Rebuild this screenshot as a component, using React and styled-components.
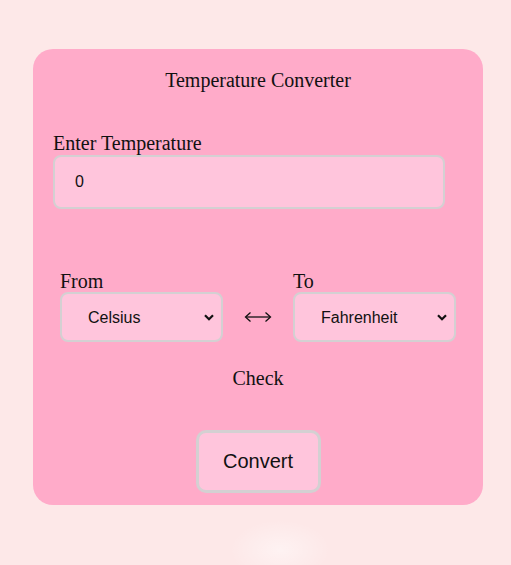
import styled, { createGlobalStyle } from "styled-components";

const GlobalStyle = createGlobalStyle`
    html, body {
        margin: 0;
        padding: 0;
        background: #fde8e8;
    }
`;

const Page = styled.div`
    min-height: 565px;
    box-sizing: border-box;
    padding: 49px 0 0 33px;
    background:
        radial-gradient(ellipse 50px 30px at 280px 550px, rgba(255, 255, 255, 0.45), transparent),
        #fde8e8;
`;

const Card = styled.div`
    width: 450px;
    box-sizing: border-box;
    padding: 18px 20px 12px;
    background: #ffabc9;
    border-radius: 20px;
    font-family: "Liberation Serif", "Times New Roman", serif;
    color: #111;
`;

const Title = styled.h2`
    margin: 0;
    font-size: 20px;
    font-weight: normal;
    text-align: center;
    line-height: 26px;
`;

const Label = styled.label`
    display: block;
    font-size: 20px;
    line-height: 23px;
    margin-top: ${p => p.$top || 0}px;
`;

const TextInput = styled.input`
    display: block;
    width: 392px;
    height: 54px;
    box-sizing: border-box;
    margin-top: 0;
    padding: 0 20px;
    border: 2px solid #d4d0d2;
    border-radius: 8px;
    background: #ffc5dc;
    font-family: "Liberation Sans", Arial, sans-serif;
    font-size: 16px;
    color: #111;
    outline: none;
`;

const Row = styled.div`
    display: flex;
    justify-content: center;
    align-items: flex-end;
    gap: 21px;
    margin-top: 61px;
`;

const Group = styled.div`
    display: flex;
    flex-direction: column;
`;

const SelectWrap = styled.div`
    position: relative;
    width: 163px;
    height: 50px;
    margin-top: -1px;
`;

const Select = styled.select`
    appearance: none;
    width: 100%;
    height: 100%;
    box-sizing: border-box;
    padding: 0 24px 0 26px;
    border: 2px solid #d4d0d2;
    border-radius: 8px;
    background: #ffc5dc;
    font-family: "Liberation Sans", Arial, sans-serif;
    font-size: 16px;
    color: #111;
    outline: none;
`;

const Chevron = styled.svg`
    position: absolute;
    right: 9px;
    top: 22px;
    pointer-events: none;
`;

const Swap = styled.svg`
    display: block;
    margin-bottom: 19px;
`;

const Check = styled.p`
    margin: 25px 0 0;
    text-align: center;
    font-size: 20px;
    line-height: 23px;
`;

const ButtonRow = styled.div`
    display: flex;
    justify-content: center;
    margin-top: 40px;
`;

const Button = styled.button`
    width: 125px;
    height: 63px;
    border: 3px solid #d4d0d2;
    border-radius: 10px;
    background: #ffc5dc;
    font-family: "Liberation Sans", Arial, sans-serif;
    font-size: 20px;
    color: #111;
    cursor: pointer;
`;

const UnitSelect = ({ value }) => (
    <SelectWrap>
        <Select defaultValue={value}>
            <option value="c">Celsius</option>
            <option value="f">Fahrenheit</option>
            <option value="k">Kelvin</option>
        </Select>
        <Chevron width="10" height="7" viewBox="0 0 10 7">
            <path d="M1 1.2 L5 5.2 L9 1.2" fill="none" stroke="#111" strokeWidth="2.2" />
        </Chevron>
    </SelectWrap>
);

export default function App() {
    return (
        <>
            <GlobalStyle />
            <Page>
                <Card>
                    <Title>Temperature Converter</Title>
                    <Label $top={39}>Enter Temperature</Label>
                    <TextInput type="number" defaultValue="0" />
                    <Row>
                        <Group>
                            <Label>From</Label>
                            <UnitSelect value="c" />
                        </Group>
                        <Swap width="28" height="12" viewBox="0 0 28 12">
                            <path d="M2 6 H26" stroke="#111" strokeWidth="1.3" />
                            <path d="M6.5 1.5 L1.5 6 L6.5 10.5 M21.5 1.5 L26.5 6 L21.5 10.5" fill="none" stroke="#111" strokeWidth="1.3" />
                        </Swap>
                        <Group>
                            <Label>To</Label>
                            <UnitSelect value="f" />
                        </Group>
                    </Row>
                    <Check>Check</Check>
                    <ButtonRow>
                        <Button>Convert</Button>
                    </ButtonRow>
                </Card>
            </Page>
        </>
    );
}
